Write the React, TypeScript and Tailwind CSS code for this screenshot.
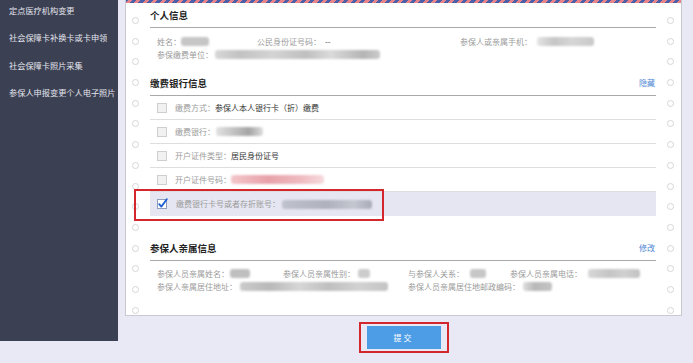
import React from "react";

function Circle() {
  return <div className="w-[7px] h-[7px] rounded-full border border-[#d6d6d6] bg-white shrink-0" />;
}

function CircleCol({ right }: { right?: boolean }) {
  return (
    <div
      className={
        right
          ? "w-[25px] shrink-0 flex flex-col pt-[14px] gap-[13.7px] pl-[11px]"
          : "w-[24px] shrink-0 flex flex-col pt-[14px] gap-[13.7px] pl-[6px]"
      }
    >
      {Array.from({ length: 15 }).map((_, i) => (
        <Circle key={i} />
      ))}
    </div>
  );
}

function Blur({ className }: { className: string }) {
  return <span className={"inline-block h-[9px] rounded-[3px] blur-[1px] align-middle " + className} />;
}

function Label({ children }: { children: React.ReactNode }) {
  return <span className="text-[#9b9b9b]">{children}</span>;
}

function Box() {
  return <div className="w-[10px] h-[10px] shrink-0 bg-[#f1f1f1] border border-[#cfcfcf]" />;
}

function Checked() {
  return (
    <svg width="12" height="12" viewBox="0 0 12 12" className="shrink-0 -ml-[1px]">
      <rect x="1.5" y="1.5" width="9" height="9" fill="#ffffff" stroke="#8d9cbf" strokeWidth="1" />
      <path d="M3.2 6.2 L5.3 8.6 L10.8 1.2" fill="none" stroke="#1f5fd1" strokeWidth="1.8" strokeLinecap="round" strokeLinejoin="round" />
    </svg>
  );
}

function Title({ children, link, h }: { children: React.ReactNode; link?: string; h: string }) {
  return (
    <div className={"flex items-end justify-between border-b border-[#a9a9a9] pb-[6px] " + h}>
      <span className="text-[9.5px] leading-[12px] font-bold text-[#222]">{children}</span>
      {link ? (
        <span className="text-[8px] leading-[12px] text-[#4f86d4] mr-[1px]">{link}</span>
      ) : null}
    </div>
  );
}

function BankRow({ children, checked, last }: { children: React.ReactNode; checked?: boolean; last?: boolean }) {
  return (
    <div
      className={
        last
          ? "h-[24px] flex items-center pl-[7px] bg-[#e5e6f1]"
          : "h-[24px] flex items-center pl-[7px] border-b border-[#dedede]"
      }
    >
      {checked ? <Checked /> : <Box />}
      <div className="ml-[8px] text-[8px] leading-[12px] flex items-center">{children}</div>
    </div>
  );
}

export default function App() {
  return (
    <div className="w-[693px] h-[363px] bg-[#e9e9f5] flex overflow-hidden font-['Noto_Sans_CJK_SC','Noto_Sans',sans-serif]">
      {/* sidebar */}
      <div className="w-[118px] h-[341px] shrink-0 bg-[#3b4052] flex flex-col pt-[4px] pl-[9px] gap-[15.4px] text-[8.2px] leading-[12px] text-[#e4e5ee]">
        <div>定点医疗机构变更</div>
        <div>社会保障卡补换卡或卡申领</div>
        <div>社会保障卡照片采集</div>
        <div>参保人申报变更个人电子照片</div>
      </div>

      <div className="ml-[7px] w-[557px] flex flex-col">
        {/* card */}
        <div className="relative h-[316px] bg-white border-x border-b border-[#c9c9d2] flex flex-col">
          <div className="h-[3px] shrink-0 bg-[repeating-linear-gradient(-45deg,#e8838a_0_3px,#4a5fa8_3px_6px)]" />
          <div className="flex flex-1">
            <CircleCol />
            <div className="flex-1 flex flex-col">
              {/* 个人信息 */}
              <Title h="h-[25px] pb-[5px]">个人信息</Title>
              <div className="pt-[7px] pl-[7px] text-[8px] leading-[13px]">
                <div className="flex items-center">
                  <div className="w-[100px] flex items-center">
                    <Label>姓名：</Label>
                    <Blur className="w-[28px] bg-[#c6c6c6]" />
                  </div>
                  <div className="w-[203px] flex items-center">
                    <Label>公民身份证号码：</Label>
                    <span className="ml-[4px] text-[#444]">--</span>
                  </div>
                  <div className="flex items-center">
                    <Label>参保人或亲属手机：</Label>
                    <Blur className="ml-[5px] w-[57px] bg-[linear-gradient(90deg,#e4e4e4,#c6c6c6_30%,#d6d6d6_60%,#c9c9c9)]" />
                  </div>
                </div>
                <div className="flex items-center">
                  <Label>参保缴费单位：</Label>
                  <Blur className="ml-[2px] w-[165px] bg-[linear-gradient(90deg,#d8d8d8,#c2c2c2_15%,#d4d4d4_35%,#bfbfbf_55%,#dadada_70%,#b5b5b5_90%,#cbcbcb)]" />
                </div>
              </div>

              {/* 缴费银行信息 */}
              <Title h="h-[35px]" link="隐藏">缴费银行信息</Title>
              <BankRow>
                <Label>缴费方式：</Label>
                <span className="text-[#333]">参保人本人银行卡（折）缴费</span>
              </BankRow>
              <BankRow>
                <Label>缴费银行：</Label>
                <Blur className="ml-[1px] w-[47px] bg-[linear-gradient(90deg,#e2e2e2,#c0c0c0_40%,#a5a5a5_70%,#dedede)]" />
              </BankRow>
              <BankRow>
                <Label>开户证件类型：</Label>
                <span className="text-[#333]">居民身份证号</span>
              </BankRow>
              <BankRow>
                <Label>开户证件号码：</Label>
                <Blur className="w-[93px] bg-[linear-gradient(90deg,#f3c6ca,#e8a2a9_40%,#efbbc0_75%,#f6dadd)]" />
              </BankRow>
              <BankRow checked last>
                <Label>缴费银行卡号或者存折账号：</Label>
                <Blur className="ml-[2px] w-[90px] bg-[linear-gradient(90deg,#bfc1cc,#afb1bd_50%,#c4c6d0_80%,#a9abb8)]" />
              </BankRow>

              {/* 参保人亲属信息 */}
              <Title h="h-[45px]" link="修改">参保人亲属信息</Title>
              <div className="pt-[6px] pl-[7px] text-[8px] leading-[13px]">
                <div className="flex items-center">
                  <div className="w-[126px] flex items-center">
                    <Label>参保人员亲属姓名：</Label>
                    <Blur className="ml-[1px] w-[20px] bg-[#bfbfbf]" />
                  </div>
                  <div className="w-[125px] flex items-center">
                    <Label>参保人员亲属性别：</Label>
                    <Blur className="ml-[3px] w-[12px] bg-[#cccccc]" />
                  </div>
                  <div className="w-[102px] flex items-center">
                    <Label>与参保人关系：</Label>
                    <Blur className="ml-[6px] w-[16px] bg-[#c7c7c7]" />
                  </div>
                  <div className="flex items-center">
                    <Label>参保人员亲属电话：</Label>
                    <Blur className="ml-[6px] w-[52px] bg-[linear-gradient(90deg,#d8d8d8,#c5c5c5_40%,#d0d0d0_70%,#c2c2c2)]" />
                  </div>
                </div>
                <div className="flex items-center">
                  <div className="w-[251px] flex items-center">
                    <Label>参保人亲属居住地址：</Label>
                    <Blur className="ml-[3px] w-[148px] bg-[linear-gradient(90deg,#cbcbcb,#b9b9b9_20%,#d6d6d6_40%,#bfbfbf_60%,#d2d2d2_80%,#c4c4c4)]" />
                  </div>
                  <div className="flex items-center">
                    <Label>参保人员亲属居住地邮政编码：</Label>
                    <Blur className="ml-[3px] w-[29px] bg-[linear-gradient(90deg,#dedede,#b9b9b9_40%,#c4c4c4)]" />
                  </div>
                </div>
              </div>
            </div>
            <CircleCol right />
          </div>

          {/* annotation box over the selected row */}
          <div className="absolute left-[8px] top-[189px] w-[250px] h-[32px] border-2 border-[#d3262d]" />
        </div>

        {/* submit */}
        <div className="mt-[6px] flex justify-center">
          <div className="border-2 border-[#d3262d] px-[6px] py-[2px]">
            <button className="w-[74px] h-[23px] bg-[#4c9de6] text-white text-[8px] tracking-[2px] flex items-center justify-center">
              提交
            </button>
          </div>
        </div>
      </div>
    </div>
  );
}
